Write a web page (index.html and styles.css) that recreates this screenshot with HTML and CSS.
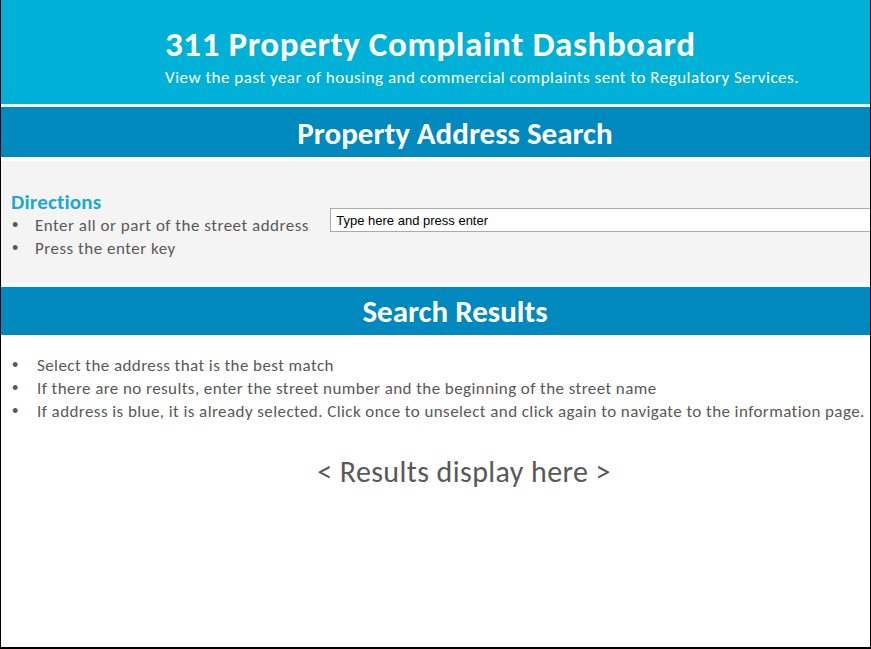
FILE: index.html
```html
<!DOCTYPE html>
<html lang="en">
<head>
    <meta charset="UTF-8">
    <meta name="viewport" content="width=device-width, initial-scale=1.0">
    <title>311 Property Complaint Dashboard</title>
    <link rel="stylesheet" href="styles.css">
</head>
<body>
    <div class="frame">
        <div class="page">
            <header class="top">
                <h1>311 Property Complaint Dashboard</h1>
                <p>View the past year of housing and commercial complaints sent to Regulatory Services.</p>
            </header>

            <h2 class="band band-search">Property Address Search</h2>

            <section class="search">
                <div class="directions">
                    <h3>Directions</h3>
                    <ul class="bullets">
                        <li>Enter all or part of the street address</li>
                        <li>Press the enter key</li>
                    </ul>
                </div>
                <input type="text" id="address" class="address" value="Type here and press enter">
            </section>

            <h2 class="band band-results">Search Results</h2>

            <section class="results">
                <ul class="bullets">
                    <li>Select the address that is the best match</li>
                    <li>If there are no results, enter the street number and the beginning of the street name</li>
                    <li>If address is blue, it is already selected. Click once to unselect and click again to navigate to the information page.</li>
                </ul>
                <p class="placeholder">&lt; Results display here &gt;</p>
            </section>
        </div>
    </div>
</body>
</html>
```
FILE: styles.css
```css
body {
    margin: 0;
    font-family: Carlito, Calibri, "Open Sans", sans-serif;
    background-color: white;
}

.frame {
    width: 871px;
    height: 649px;
    box-sizing: border-box;
    border-left: 1px solid #000;
    border-right: 1px solid #000;
    border-bottom: 2px solid #000;
    overflow: hidden;
}

.page {
    width: 908px;
}

.top {
    background-color: #00b1d7;
    color: #fff;
    height: 104px;
    box-sizing: border-box;
    padding: 24px 0 0 164px;
}

.top h1 {
    margin: 0;
    font-size: 35px;
    letter-spacing: 0.6px;
    line-height: 40px;
    font-weight: bold;
}

.top p {
    margin: 4px 0 0 0;
    font-size: 17px;
    letter-spacing: 0.5px;
    line-height: 20px;
}

.band {
    margin: 0;
    background-color: #0089bf;
    color: #fff;
    text-align: center;
    font-weight: bold;
    font-size: 31px;
}

.band-search {
    margin-top: 3px;
    height: 50px;
    line-height: 53px;
}

.band-results {
    margin-top: 4px;
    height: 48px;
    line-height: 48px;
}

.search {
    margin-top: 4px;
    background-color: #f4f4f4;
    display: flex;
    align-items: flex-start;
    padding: 29px 0 23px 10px;
}

.directions {
    width: 320px;
}

.directions h3 {
    margin: 0;
    color: #1aa9d5;
    font-size: 21px;
    letter-spacing: 0.2px;
    line-height: 24px;
    font-weight: bold;
}

.bullets {
    list-style: none;
    margin: 0;
    padding: 0;
    color: #595959;
    font-size: 17px;
    letter-spacing: 0.5px;
    line-height: 23px;
}

.bullets li {
    white-space: nowrap;
}

.bullets li::before {
    content: "\2022";
    display: inline-block;
    width: 23px;
    padding-left: 1px;
    letter-spacing: 0;
    font-family: "Liberation Sans", sans-serif;
    font-size: 18px;
    color: #595959;
}

.results .bullets {
    letter-spacing: 0.42px;
}

.results .bullets li::before {
    width: 25px;
}

.address {
    margin-top: 18px;
    width: 580px;
    height: 24px;
    box-sizing: border-box;
    border: 1px solid #aaa;
    padding: 0 5px;
    font-family: "Liberation Sans", Arial, sans-serif;
    font-size: 13px;
    color: #000;
    background-color: #fff;
}

.address:focus {
    outline: none;
}

.results {
    padding: 19px 0 0 10px;
}

.placeholder {
    margin: 32px 0 0 0;
    padding-left: 8px;
    text-align: center;
    color: #595959;
    font-size: 30px;
    letter-spacing: 0.4px;
    line-height: 34px;
}
```
